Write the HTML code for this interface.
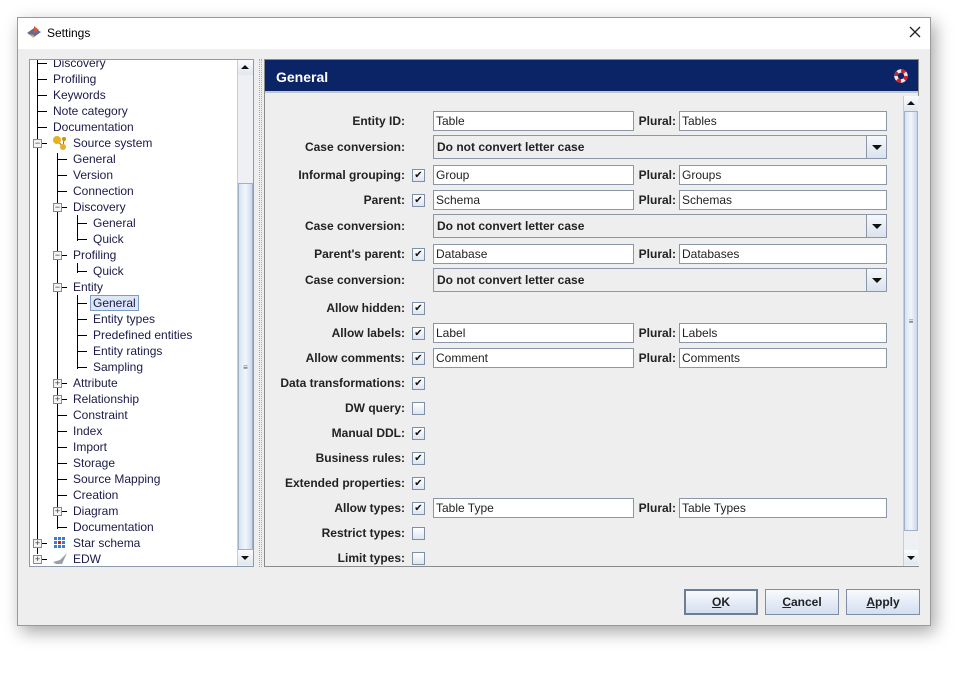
<!DOCTYPE html>
<html><head><style>
*{box-sizing:border-box;margin:0;padding:0}
body{width:980px;height:674px;background:#fff;font-family:"Liberation Sans",sans-serif;font-size:12px;color:#222;position:relative;overflow:hidden}
.a{position:absolute}
.win{left:17px;top:17px;width:914px;height:609px;background:#eeeeee;border:1px solid #9a9a9a;box-shadow:4px 6px 16px rgba(0,0,0,.35)}
.tb{left:0;top:0;width:912px;height:31px;background:#fff}
.tree{left:29px;top:59px;width:225px;height:508px;background:#fff;border:1px solid #8a9bb0;overflow:hidden}
.tr{position:absolute;height:16px;line-height:16px;color:#1a1a4a;white-space:nowrap}
.vl{position:absolute;width:1px;background:#000}
.hl{position:absolute;height:1px;background:#000}
.ex{position:absolute;width:9px;height:9px;border:1px solid #8a8a8a;background:#f4f4f4;font-size:9px;line-height:7px;text-align:center;color:#335}
.lbl{position:absolute;font-weight:bold;text-align:right;width:200px;color:#222}
.tf{position:absolute;height:20px;background:#fff;border:1px solid #8b97a8;line-height:18px;padding-left:2px;color:#222}
.cb{position:absolute;width:13px;height:13px;border:1px solid #7f8fa6;background:linear-gradient(#fff,#dde5ef);font-size:10px;line-height:11px;text-align:center;color:#111}
.co{position:absolute;height:24px;background:#eeeeee;border:1px solid #8b97a8;line-height:22px;padding-left:3px;font-weight:bold}
.ar{position:absolute;right:0;top:0;width:20px;height:22px;border-left:1px solid #8b97a8;background:linear-gradient(#f6f8fb,#dbe3ee)}
.ar:after{content:"";position:absolute;left:5px;top:9px;border-left:5px solid transparent;border-right:5px solid transparent;border-top:5px solid #111}
.btn{position:absolute;top:589px;width:74px;height:26px;border:1px solid #7d8da3;background:linear-gradient(#f8fafd,#d4def0);text-align:center;line-height:24px;font-weight:bold;color:#222}
</style></head><body>
<div class="a win">
 <div class="a tb"></div>
</div>
<svg class="a" style="left:25px;top:24px" width="18" height="16"><path d="M2 9 L9 4 L16 8 L9 13Z" fill="#5a6e9a"/><path d="M9 2 L14 6 L9 9Z" fill="#d05a3a"/><path d="M3 10 L9 14 L9 11Z" fill="#e0a060"/></svg>
<div class="a" style="left:47px;top:26px;font-size:12px;color:#000">Settings</div>
<svg class="a" style="left:909px;top:26px" width="12" height="12"><path d="M1 1L11 11M11 1L1 11" stroke="#222" stroke-width="1.3"/></svg>

<div class="a tree">
<div class="vl" style="left:7px;top:0;height:494px"></div>
<div class="vl" style="left:27px;top:93px;height:376px"></div>
<div class="vl" style="left:47px;top:157px;height:24px"></div>
<div class="vl" style="left:47px;top:205px;height:8px"></div>
<div class="vl" style="left:47px;top:237px;height:72px"></div>
<div id="rows"></div>
</div>
<div class="a" style="left:237px;top:60px;width:16px;height:506px;background:#eef0f4;border-left:1px solid #c8ccd4"></div>
<div class="a" style="left:238px;top:60px;width:15px;height:15px;background:linear-gradient(#fafbfd,#e1e7ef)"><div style="position:absolute;left:3px;top:5px;border-left:4px solid transparent;border-right:4px solid transparent;border-bottom:4px solid #111"></div></div>
<div class="a" style="left:238px;top:183px;width:15px;height:367px;background:linear-gradient(90deg,#d6e2f2,#f2f6fb,#c9d8ec);border:1px solid #9fb1ca;font-size:8px;text-align:center;line-height:367px;color:#556">≡</div>
<div class="a" style="left:238px;top:550px;width:15px;height:15px;background:linear-gradient(#fafbfd,#e1e7ef)"><div style="position:absolute;left:3px;top:6px;border-left:4px solid transparent;border-right:4px solid transparent;border-top:4px solid #111"></div></div>

<div class="a" style="left:259px;top:59px;width:3px;height:508px;border-left:1px dotted #aaa;border-right:1px dotted #aaa"></div>

<div class="a" style="left:264px;top:59px;width:655px;height:508px;border:1px solid #8a8a8a;background:#eee"></div>
<div class="a" style="left:265px;top:60px;width:653px;height:33px;background:#0b2466;border-bottom:2px solid #c0c6d0"></div>
<div class="a" style="left:276px;top:69px;color:#fff;font-weight:bold;font-size:14px">General</div>
<svg class="a" style="left:894px;top:69px" width="14" height="14"><circle cx="7" cy="7" r="5" fill="none" stroke="#e8e8e8" stroke-width="3.5"/><circle cx="7" cy="7" r="5" fill="none" stroke="#d0202a" stroke-width="3.5" stroke-dasharray="4 3.85"/></svg>

<div class="a" style="left:903px;top:96px;width:16px;height:470px;background:#eef0f4;border-left:1px solid #c8ccd4"></div>
<div class="a" style="left:904px;top:96px;width:14px;height:15px;background:linear-gradient(#fafbfd,#e1e7ef)"><div style="position:absolute;left:3px;top:5px;border-left:4px solid transparent;border-right:4px solid transparent;border-bottom:4px solid #111"></div></div>
<div class="a" style="left:904px;top:111px;width:14px;height:420px;background:linear-gradient(90deg,#d6e2f2,#f2f6fb,#c9d8ec);border:1px solid #9fb1ca;font-size:8px;text-align:center;line-height:420px;color:#556">≡</div>
<div class="a" style="left:904px;top:550px;width:14px;height:15px;background:linear-gradient(#fafbfd,#e1e7ef)"><div style="position:absolute;left:3px;top:6px;border-left:4px solid transparent;border-right:4px solid transparent;border-top:4px solid #111"></div></div>

<div id="form"></div>

<div class="btn" style="left:684px;border:2px solid #6d7d93;line-height:22px"><u>O</u>K</div>
<div class="btn" style="left:765px"><u>C</u>ancel</div>
<div class="btn" style="left:846px"><u>A</u>pply</div>

<script>
var T=[["Discovery",1],["Profiling",1],["Keywords",1],["Note category",1],["Documentation",1],["Source system",1,"-","src"],["General",2],["Version",2],["Connection",2],["Discovery",2,"-"],["General",3,"","",1],["Quick",3,"","",1],["Profiling",2,"-"],["Quick",3,"","",1],["Entity",2,"-"],["General",3,"","",1,1],["Entity types",3],["Predefined entities",3],["Entity ratings",3],["Sampling",3,"","",1],["Attribute",2,"+"],["Relationship",2,"+"],["Constraint",2],["Index",2],["Import",2],["Storage",2],["Source Mapping",2],["Creation",2],["Diagram",2,"+"],["Documentation",2,"","",1],["Star schema",0,"+","star"],["EDW",0,"+","edw"]];
var h="";
T.forEach(function(r,i){var y=-5+16*i,c=y+8,lv=r[1];
var tx=[43,23,43,63][lv];var lx=[7,7,27,47][lv];
if(r[3])tx=43;
if(r[4])h+='<div class="vl" style="left:'+lx+'px;top:'+(c-8)+'px;height:8px"></div>';
h+='<div class="hl" style="left:'+lx+'px;top:'+c+'px;width:10px"></div>';
if(r[2])h+='<div class="ex" style="left:'+(lx-4)+'px;top:'+(c-4)+'px">'+(r[2]=="-"?"−":"+")+'</div>';
if(r[3]=="src")h+='<svg style="position:absolute;left:22px;top:'+(c-8)+'px" width="16" height="16"><path d="M5 5L11 12M12 4L11 12" stroke="#a07010"/><circle cx="5" cy="5" r="4" fill="#e8b020"/><circle cx="11" cy="12" r="3" fill="#e8b020"/><circle cx="12" cy="4" r="2" fill="#c89010"/></svg>';
if(r[3]=="star")h+='<svg style="position:absolute;left:23px;top:'+(c-7)+'px" width="14" height="14"><g fill="#3a7bd5"><rect x="1" y="1" width="3" height="3"/><rect x="5" y="1" width="3" height="3"/><rect x="9" y="1" width="3" height="3"/><rect x="1" y="5" width="3" height="3"/><rect x="9" y="5" width="3" height="3"/><rect x="1" y="9" width="3" height="3"/><rect x="5" y="9" width="3" height="3"/><rect x="9" y="9" width="3" height="3"/></g><rect x="5" y="5" width="3" height="3" fill="#d02020"/></svg>';
if(r[3]=="edw")h+='<svg style="position:absolute;left:22px;top:'+(c-7)+'px" width="16" height="14"><path d="M1 10L8 8L15 1L10 12L4 12Z" fill="#9aa0a8"/></svg>';
var sel=r[5]?'background:#dbe6f6;border:1px solid #7a9cc8;padding:0 2px;line-height:14px;':'';
h+='<div class="tr" style="left:'+(sel?tx-3:tx)+'px;top:'+y+'px;'+sel+'">'+r[0]+'</div>';});
document.getElementById("rows").innerHTML=h;
var F=[["Entity ID:",121,0,"Table","Tables"],["Case conversion:",147,"c"],["Informal grouping:",175,1,"Group","Groups"],["Parent:",200,1,"Schema","Schemas"],["Case conversion:",226,"c"],["Parent's parent:",254,1,"Database","Databases"],["Case conversion:",280,"c"],["Allow hidden:",308,1],["Allow labels:",333,1,"Label","Labels"],["Allow comments:",358,1,"Comment","Comments"],["Data transformations:",383,1],["DW query:",408,2],["Manual DDL:",433,1],["Business rules:",458,1],["Extended properties:",483,1],["Allow types:",508,1,"Table Type","Table Types"],["Restrict types:",533,2],["Limit types:",558,2]];
var g="";
F.forEach(function(f){var c=f[1];
g+='<div class="lbl" style="left:205px;top:'+(c-7)+'px">'+f[0]+'</div>';
if(f[2]=="c"){g+='<div class="co" style="left:433px;top:'+(c-12)+'px;width:454px">Do not convert letter case<div class="ar"></div></div>';return;}
if(f[2])g+='<div class="cb" style="left:412px;top:'+(c-6)+'px">'+(f[2]==1?'✔':'')+'</div>';
if(f[3]){g+='<div class="tf" style="left:433px;top:'+(c-10)+'px;width:201px">'+f[3]+'</div>';
g+='<div class="lbl" style="left:476px;top:'+(c-7)+'px">Plural:</div>';
g+='<div class="tf" style="left:679px;top:'+(c-10)+'px;width:208px">'+f[4]+'</div>';}
});
document.getElementById("form").innerHTML=g;
</script>
</body></html>
